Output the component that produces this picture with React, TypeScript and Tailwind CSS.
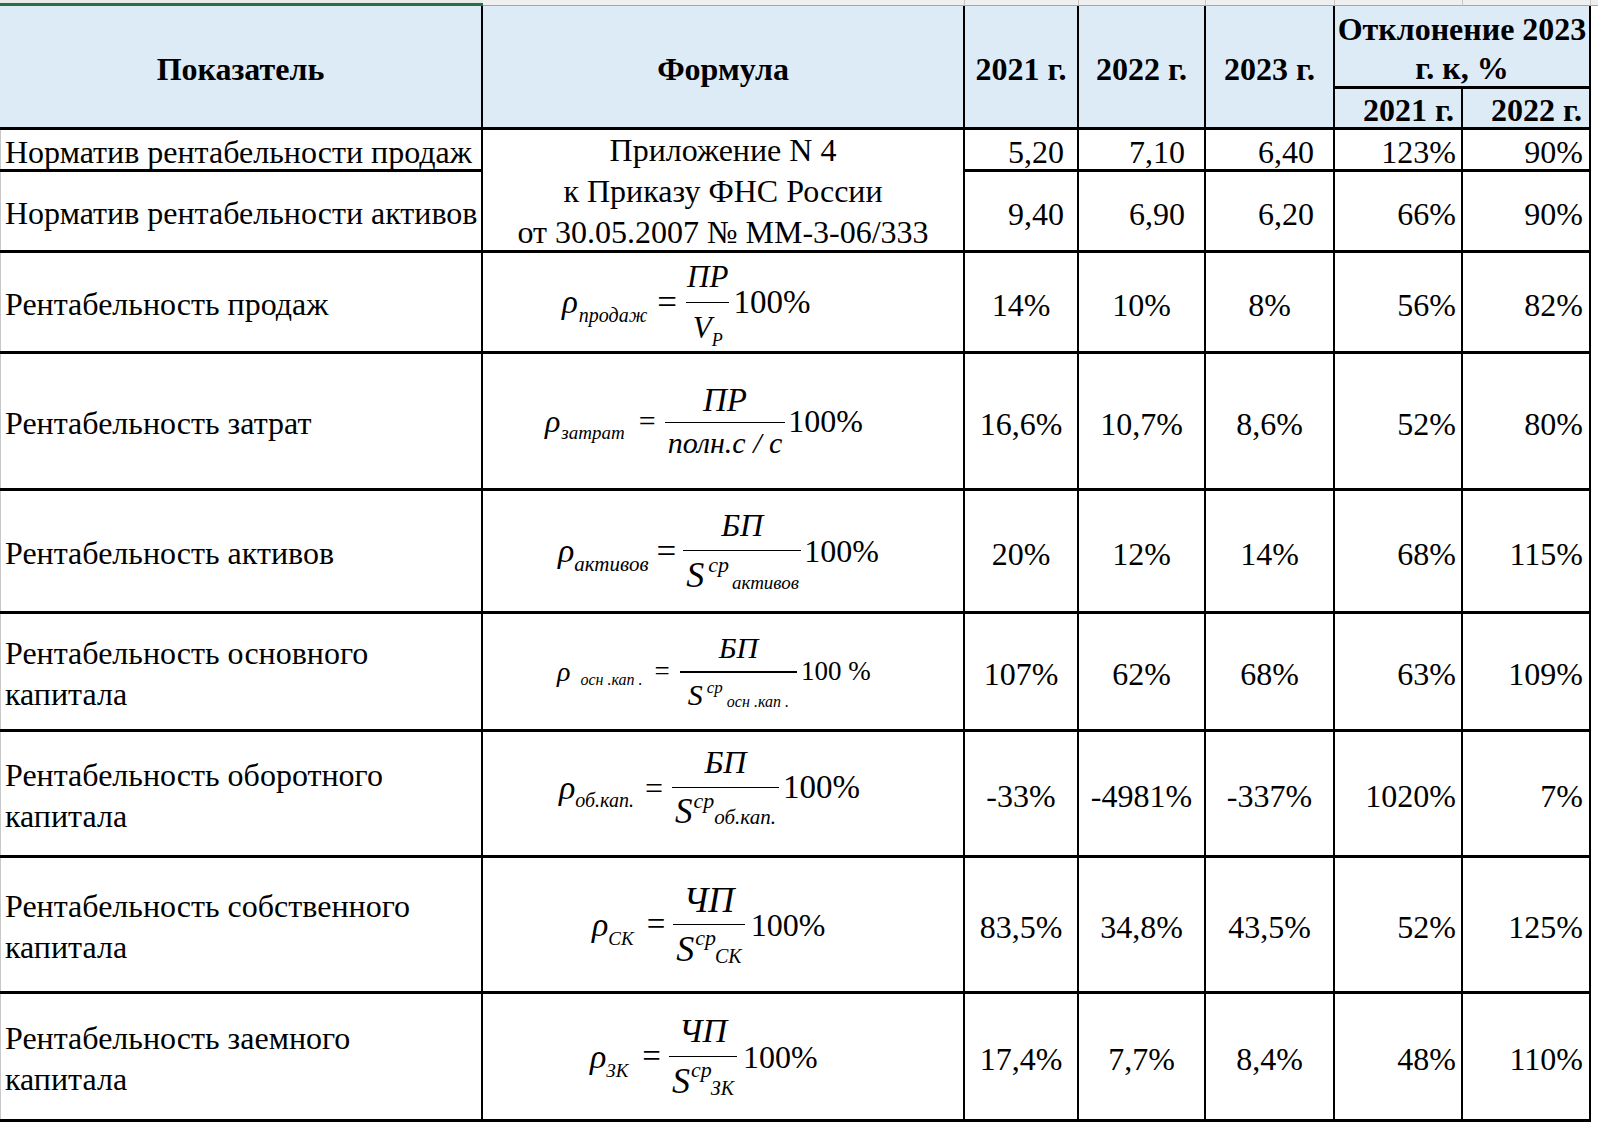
import type { ReactNode } from "react";

function Rho({ size, sub, subCls }: { size: string; sub: string; subCls: string }) {
  return (
    <span className="flex items-baseline leading-none">
      <span className={`italic ${size}`}>ρ</span>
      <span className={`italic whitespace-pre ${subCls}`}>{sub}</span>
    </span>
  );
}

function Frac({ num, den, numCls, denCls }: { num: ReactNode; den: ReactNode; numCls: string; denCls: string }) {
  return (
    <span className="inline-flex flex-col items-stretch leading-none">
      <span className={`self-center italic ${numCls}`}>{num}</span>
      <span className="h-[1.5px] bg-black" />
      <span className={`self-center ${denCls}`}>{den}</span>
    </span>
  );
}

function SAvg({ sCls, supCls, sub, subCls }: { sCls: string; supCls: string; sub: string; subCls: string }) {
  return (
    <span className="flex items-baseline italic leading-none">
      <span className={sCls}>S</span>
      <span className={supCls}>ср</span>
      <span className={`whitespace-pre ${subCls}`}>{sub}</span>
    </span>
  );
}

function Head({ children, cls }: { children: ReactNode; cls: string }) {
  return <div className={`flex items-center bg-[#ddebf7] font-bold ${cls}`}>{children}</div>;
}

function Label({ children }: { children: ReactNode }) {
  return (
    <div className="flex items-center whitespace-nowrap border-l border-[#c8c8c8] bg-white pt-[5px] pl-[4px] leading-[41px]">
      {children}
    </div>
  );
}

function Num({ children, cls }: { children: ReactNode; cls: string }) {
  return <div className={`flex items-center bg-white pt-[5px] ${cls}`}>{children}</div>;
}

function Formula({ children, cls }: { children: ReactNode; cls: string }) {
  return <div className={`flex items-center bg-white ${cls}`}>{children}</div>;
}

export default function App() {
  return (
    <div className="h-[1126px] w-[1598px] overflow-hidden bg-white font-['Liberation_Serif','Times_New_Roman',serif] text-[32px] text-black">
      {/* sheet column header strip */}
      <div className="flex h-[6px]">
        <div className="w-[483px] border-b-[3px] border-[#217346] bg-[#e9e9e9]" />
        <div className="w-[482px] border-r border-b border-[#c6c6c6] border-b-[#a6a6a6] bg-[#efefef]" />
        <div className="w-[114px] border-r border-b border-[#c6c6c6] border-b-[#a6a6a6] bg-[#efefef]" />
        <div className="w-[127px] border-r border-b border-[#c6c6c6] border-b-[#a6a6a6] bg-[#efefef]" />
        <div className="w-[129px] border-r border-b border-[#c6c6c6] border-b-[#a6a6a6] bg-[#efefef]" />
        <div className="w-[128px] border-r border-b border-[#c6c6c6] border-b-[#a6a6a6] bg-[#efefef]" />
        <div className="w-[128px] border-r border-b border-[#c6c6c6] border-b-[#a6a6a6] bg-[#efefef]" />
        <div className="flex-1 border-b border-[#a6a6a6] bg-[#efefef]" />
      </div>

      <div className="grid w-fit grid-cols-[481px_480px_112px_125px_127px_126px_126px] grid-rows-[80px_38px_39px_78px_98px_134px_120px_115px_123px_133px_125px] gap-x-[2px] gap-y-[3px] bg-black pr-[2px] pb-[3px]">
        {/* header */}
        <Head cls="row-span-2 justify-center pt-[4px]">Показатель</Head>
        <Head cls="row-span-2 justify-center pt-[4px]">Формула</Head>
        <Head cls="row-span-2 justify-center pt-[4px]">2021 г.</Head>
        <Head cls="row-span-2 justify-center pt-[4px]">2022 г.</Head>
        <Head cls="row-span-2 justify-center pt-[4px]">2023 г.</Head>
        <Head cls="col-span-2 justify-center pt-[5px] text-center leading-[39px]">
          Отклонение 2023
          <br />
          г. к, %
        </Head>
        <Head cls="justify-end pt-[3px] pr-[7px]">2021 г.</Head>
        <Head cls="justify-end pt-[3px] pr-[7px]">2022 г.</Head>

        {/* нормативы */}
        <Label>Норматив рентабельности продаж</Label>
        <div className="row-span-2 flex items-center justify-center bg-white pt-[3px] text-center leading-[41px]">
          Приложение N 4
          <br />
          к Приказу ФНС России
          <br />
          от 30.05.2007 № ММ-3-06/333
        </div>
        <Num cls="justify-end pr-[13px]">5,20</Num>
        <Num cls="justify-end pr-[19px]">7,10</Num>
        <Num cls="justify-end pr-[19px]">6,40</Num>
        <Num cls="justify-end pr-[5px]">123%</Num>
        <Num cls="justify-end pr-[6px]">90%</Num>

        <Label>Норматив рентабельности активов</Label>
        <Num cls="justify-end pr-[13px]">9,40</Num>
        <Num cls="justify-end pr-[19px]">6,90</Num>
        <Num cls="justify-end pr-[19px]">6,20</Num>
        <Num cls="justify-end pr-[5px]">66%</Num>
        <Num cls="justify-end pr-[6px]">90%</Num>

        {/* рентабельность продаж */}
        <Label>Рентабельность продаж</Label>
        <Formula cls="pl-[79px]">
          <Rho size="text-[33px]" sub="продаж" subCls="text-[20px] translate-y-[9px] ml-[1px]" />
          <span className="ml-[10px] mr-[9px] text-[35px] leading-none">=</span>
          <Frac
            num="ПР"
            numCls="text-[31px] pb-[10px] px-[1px]"
            den={
              <span className="flex items-baseline italic">
                <span>V</span>
                <span className="translate-y-[8px] text-[18px]">P</span>
              </span>
            }
            denCls="text-[31px] pt-[9px] px-[1px]"
          />
          <span className="ml-[4px] text-[33px] leading-none">100%</span>
        </Formula>
        <Num cls="justify-center">14%</Num>
        <Num cls="justify-center">10%</Num>
        <Num cls="justify-center">8%</Num>
        <Num cls="justify-end pr-[5px]">56%</Num>
        <Num cls="justify-end pr-[6px]">82%</Num>

        {/* рентабельность затрат */}
        <Label>Рентабельность затрат</Label>
        <Formula cls="pl-[62px]">
          <Rho size="text-[32px]" sub="затрат" subCls="text-[19px] translate-y-[7px] ml-[1px]" />
          <span className="ml-[14px] mr-[9px] text-[30px] leading-none">=</span>
          <Frac
            num="ПР"
            numCls="text-[33px] pb-[5px] px-[3px]"
            den={<span className="italic">полн.с / с</span>}
            denCls="text-[30px] pt-[5px] px-[3px]"
          />
          <span className="ml-[3px] text-[32px] leading-none">100%</span>
        </Formula>
        <Num cls="justify-center">16,6%</Num>
        <Num cls="justify-center">10,7%</Num>
        <Num cls="justify-center">8,6%</Num>
        <Num cls="justify-end pr-[5px]">52%</Num>
        <Num cls="justify-end pr-[6px]">80%</Num>

        {/* рентабельность активов */}
        <Label>Рентабельность активов</Label>
        <Formula cls="pl-[75px]">
          <Rho size="text-[34px]" sub="активов" subCls="text-[21px] translate-y-[9px]" />
          <span className="ml-[8px] mr-[7px] text-[35px] leading-none">=</span>
          <Frac
            num="БП"
            numCls="text-[32px] pb-[9px]"
            den={<SAvg sCls="text-[36px]" supCls="text-[22px] -translate-y-[15px] ml-[4px]" sub="активов" subCls="text-[19px] translate-y-[2px] ml-[3px]" />}
            denCls="pt-[6px] pl-[3px] pr-[2px]"
          />
          <span className="ml-[3px] text-[32px] leading-none">100%</span>
        </Formula>
        <Num cls="justify-center">20%</Num>
        <Num cls="justify-center">12%</Num>
        <Num cls="justify-center">14%</Num>
        <Num cls="justify-end pr-[5px]">68%</Num>
        <Num cls="justify-end pr-[6px]">115%</Num>

        {/* основной капитал */}
        <Label>
          Рентабельность основного
          <br />
          капитала
        </Label>
        <Formula cls="pl-[74px]">
          <Rho size="text-[28px]" sub="осн .кап ." subCls="text-[16px] translate-y-[4px] ml-[10px]" />
          <span className="ml-[12px] mr-[10px] text-[27px] leading-none">=</span>
          <Frac
            num="БП"
            numCls="text-[30px] pb-[8px]"
            den={<SAvg sCls="text-[30px]" supCls="text-[17px] -translate-y-[12px] ml-[4px]" sub="осн .кап ." subCls="text-[16px] translate-y-[2px] ml-[4px]" />}
            denCls="pt-[7px] px-[8px]"
          />
          <span className="ml-[4px] text-[27px] leading-none">100 %</span>
        </Formula>
        <Num cls="justify-center">107%</Num>
        <Num cls="justify-center">62%</Num>
        <Num cls="justify-center">68%</Num>
        <Num cls="justify-end pr-[5px]">63%</Num>
        <Num cls="justify-end pr-[6px]">109%</Num>

        {/* оборотный капитал */}
        <Label>
          Рентабельность оборотного
          <br />
          капитала
        </Label>
        <Formula cls="pl-[76px] pb-[12px]">
          <Rho size="text-[34px]" sub="об.кап." subCls="text-[20px] translate-y-[8px]" />
          <span className="ml-[11px] mr-[9px] text-[32px] leading-none">=</span>
          <Frac
            num="БП"
            numCls="text-[32px] pb-[9px]"
            den={<SAvg sCls="text-[35px]" supCls="text-[22px] -translate-y-[15px] ml-[1px]" sub="об.кап." subCls="text-[21px] translate-y-[1px]" />}
            denCls="pt-[6px] px-[3px]"
          />
          <span className="ml-[4px] text-[33px] leading-none">100%</span>
        </Formula>
        <Num cls="justify-center">-33%</Num>
        <Num cls="justify-center">-4981%</Num>
        <Num cls="justify-center">-337%</Num>
        <Num cls="justify-end pr-[5px]">1020%</Num>
        <Num cls="justify-end pr-[6px]">7%</Num>

        {/* собственный капитал */}
        <Label>
          Рентабельность собственного
          <br />
          капитала
        </Label>
        <Formula cls="pl-[109px]">
          <Rho size="text-[34px]" sub="СК" subCls="text-[19px] translate-y-[9px]" />
          <span className="ml-[13px] mr-[8px] text-[33px] leading-none">=</span>
          <Frac
            num="ЧП"
            numCls="text-[36px] pb-[6px]"
            den={<SAvg sCls="text-[36px]" supCls="text-[22px] -translate-y-[16px] ml-[1px]" sub="СК" subCls="text-[20px] translate-y-[2px] -ml-[1px]" />}
            denCls="pt-[6px] px-[3px]"
          />
          <span className="ml-[6px] text-[32px] leading-none">100%</span>
        </Formula>
        <Num cls="justify-center">83,5%</Num>
        <Num cls="justify-center">34,8%</Num>
        <Num cls="justify-center">43,5%</Num>
        <Num cls="justify-end pr-[5px]">52%</Num>
        <Num cls="justify-end pr-[6px]">125%</Num>

        {/* заемный капитал */}
        <Label>
          Рентабельность заемного
          <br />
          капитала
        </Label>
        <Formula cls="pl-[107px]">
          <Rho size="text-[34px]" sub="ЗК" subCls="text-[19px] translate-y-[9px]" />
          <span className="ml-[14px] mr-[8px] text-[33px] leading-none">=</span>
          <Frac
            num="ЧП"
            numCls="text-[34px] pb-[8px]"
            den={<SAvg sCls="text-[36px]" supCls="text-[22px] -translate-y-[16px] ml-[1px]" sub="ЗК" subCls="text-[20px] translate-y-[2px] -ml-[1px]" />}
            denCls="pt-[6px] px-[3px]"
          />
          <span className="ml-[6px] text-[32px] leading-none">100%</span>
        </Formula>
        <Num cls="justify-center">17,4%</Num>
        <Num cls="justify-center">7,7%</Num>
        <Num cls="justify-center">8,4%</Num>
        <Num cls="justify-end pr-[5px]">48%</Num>
        <Num cls="justify-end pr-[6px]">110%</Num>
      </div>
    </div>
  );
}
